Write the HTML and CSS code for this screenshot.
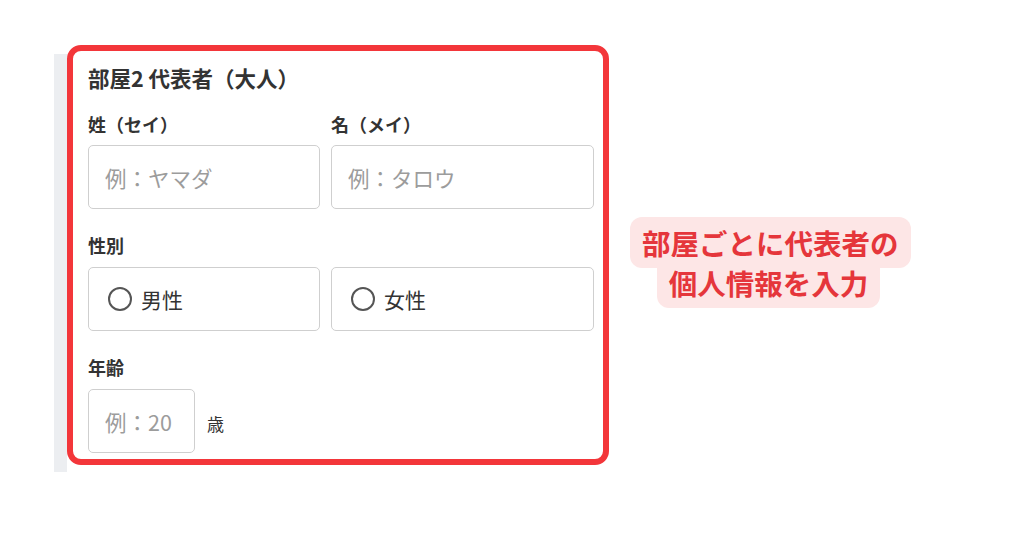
FILE: index.html
```html
<!DOCTYPE html>
<html lang="ja">
<head>
<meta charset="utf-8">
<link rel="stylesheet" href="styles.css">
</head>
<body>
<div class="page">
  <div class="strip"></div>
  <div class="frame">
    <div class="title">部屋2 代表者（大人）</div>
    <div class="grid">
      <div class="label">姓（セイ）</div>
      <div class="label">名（メイ）</div>
      <input class="field" type="text" placeholder="例：ヤマダ">
      <input class="field" type="text" placeholder="例：タロウ">
    </div>
    <div class="label gap-label">性別</div>
    <div class="grid">
      <label class="radio"><span class="circle"></span><span>男性</span></label>
      <label class="radio"><span class="circle"></span><span>女性</span></label>
    </div>
    <div class="label gap-label">年齢</div>
    <div class="age-row">
      <input class="field age" type="text" placeholder="例：20">
      <span class="unit">歳</span>
    </div>
  </div>
  <div class="callout"><span class="hl">部屋ごとに代表者の<br>個人情報を入力</span></div>
</div>
</body>
</html>
```

FILE: styles.css
```css
* { box-sizing: border-box; }
html, body { margin: 0; padding: 0; background: #ffffff; }
body {
  font-family: "Noto Sans CJK JP", "Noto Sans", sans-serif;
  color: #333333;
  width: 1024px;
  height: 538px;
  overflow: hidden;
}
.page {
  display: flex;
  align-items: flex-start;
  padding-left: 54px;
  padding-top: 45px;
}
.strip {
  width: 13px;
  height: 418px;
  margin-top: 9px;
  background: #eceef1;
  flex: none;
}
.frame {
  width: 542px;
  height: 420px;
  border: 6px solid #f3363a;
  border-radius: 14px;
  padding: 13px 9px 6px 15px;
  background: #ffffff;
  flex: none;
}
.title {
  font-size: 21.5px;
  font-weight: 700;
  line-height: 28px;
  color: #333333;
  margin-bottom: 20px;
}
.grid {
  display: grid;
  grid-template-columns: 232px 263px;
  column-gap: 11px;
}
.label {
  font-size: 18px;
  font-weight: 700;
  line-height: 24px;
  color: #333333;
  margin-bottom: 9px;
}
.gap-label {
  margin-top: 24px;
  margin-bottom: 10px;
}
.field {
  display: block;
  width: 100%;
  height: 64px;
  border: 1px solid #cfcfcf;
  border-radius: 5px;
  padding: 0 0 0 16px;
  font-family: "Noto Sans CJK JP", "Noto Sans", sans-serif;
  font-size: 21.5px;
  color: #333333;
  background: #ffffff;
  outline: none;
}
.field::placeholder { color: #9c9c9c; }
.radio {
  display: flex;
  align-items: center;
  gap: 9px;
  height: 64px;
  border: 1px solid #cfcfcf;
  border-radius: 5px;
  padding-left: 19px;
  font-size: 21px;
  color: #333333;
}
.circle {
  width: 24px;
  height: 24px;
  border: 2.5px solid #555555;
  border-radius: 50%;
  flex: none;
}
.age-row {
  display: flex;
  align-items: center;
  gap: 12px;
}
.field.age { width: 107px; }
.unit {
  font-size: 17px;
  line-height: 24px;
  padding-top: 6px;
  color: #333333;
}
.callout {
  margin-left: 21px;
  margin-top: 178px;
  width: 277px;
  text-align: center;
  font-size: 28.5px;
  font-weight: 700;
  line-height: 40px;
  color: #e5363b;
  flex: none;
}
.hl {
  background: #fde6e6;
  padding: 5px 12px;
  border-radius: 12px;
  -webkit-box-decoration-break: clone;
  box-decoration-break: clone;
}
```
